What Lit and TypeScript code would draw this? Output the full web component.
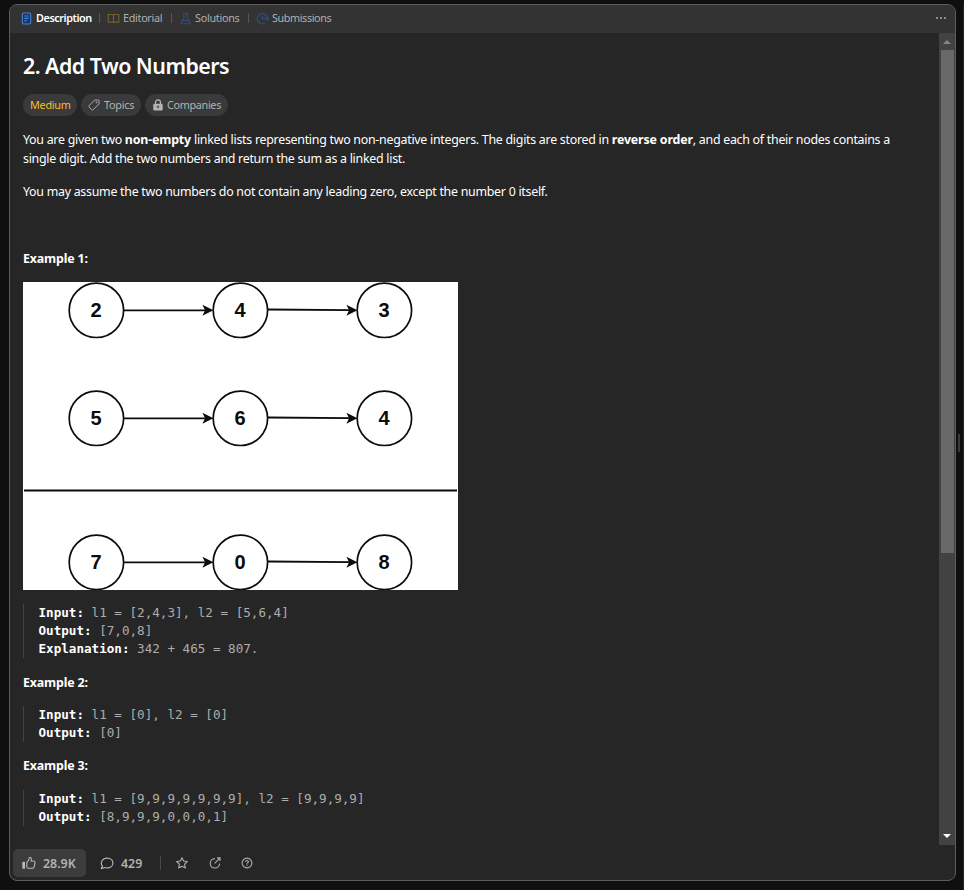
import { LitElement, html, css, svg } from "lit";
import { customElement } from "lit/decorators.js";

const xs = [73.4, 217.4, 361.4];
const rows = [
  { y: 28, v: ["2", "4", "3"] },
  { y: 136, v: ["5", "6", "4"] },
  { y: 280, v: ["7", "0", "8"] },
];

@customElement("list-diagram")
class ListDiagram extends LitElement {
  static styles = css`
    :host { display: block; width: 435px; height: 308px; background: #fff; }
    svg { display: block; }
    circle { fill: #fff; stroke: #0c0c0c; stroke-width: 1.7; }
    line { stroke: #0c0c0c; stroke-width: 1.8; }
    path { fill: #0c0c0c; }
    text { font: bold 20px "Liberation Sans", sans-serif; text-anchor: middle; fill: #0c0c0c; }
  `;
  render() {
    return html`<svg width="435" height="308" viewBox="0 0 435 308">
      ${rows.map((r) => svg`
        <line x1="101" y1=${r.y + 0.4} x2="182" y2=${r.y + 0.4}></line>
        <line x1="245" y1=${r.y - 0.5} x2="326" y2=${r.y + 0.1}></line>
        ${[190.4, 334.4].map((x) => svg`<path d="M${x} ${r.y + 0.3}l-11 -5.5 2.7 5.5 -2.7 5.5z"></path>`)}
        ${xs.map((x, i) => svg`<circle cx=${x} cy=${r.y + 0.3} r="27.2"></circle><text x=${x - 0.4} y=${r.y + 7.4}>${r.v[i]}</text>`)}
      `)}
      <line x1="1" y1="208.5" x2="434" y2="208.5"></line>
    </svg>`;
  }
}

const icons = {
  doc: html`<svg width="11" height="13" viewBox="0 0 11 13" fill="none" stroke="#3f86e0" stroke-width="1.1"><rect x="1.3" y="1" width="8.4" height="11" rx="1.4" fill="#1f3659"/><path d="M3.3 4h4.4M3.3 6.4h4.4M3.3 8.8h2.6"/></svg>`,
  book: html`<svg width="13" height="13" viewBox="0 0 13 13" fill="none" stroke="#75602a" stroke-width="1.2"><path d="M1.2 2.5h4.2q1.1 0 1.1 1v7.4q0-.7-1-.7H1.2zM11.8 2.5H7.6q-1.1 0-1.1 1v7.4q0-.7 1-.7h4.3z"/></svg>`,
  flask: html`<svg width="11" height="13" viewBox="0 0 11 13" fill="none" stroke="#304f80" stroke-width="1.1" stroke-linejoin="round"><path d="M2.6 1.3h5.8M3.9 1.3v4.2L1.2 10.2q-.6 1.5.8 1.5h7q1.4 0 .8-1.5L7.1 5.5V1.3M2.6 8.5h5.8"/></svg>`,
  clock: html`<svg width="13" height="13" viewBox="0 0 13 13" fill="none" stroke="#304f80" stroke-width="1.2"><path d="M8.8 11.3A5.2 5.2 0 1 1 11.5 5.5M6.3 3.8v3h2.4M9.6 6.3h2.9L11.2 8z"/></svg>`,
  tag: html`<svg width="12" height="12" viewBox="0 0 12 12" fill="none" stroke="#adadad" stroke-width="1" stroke-linejoin="round"><path d="M6.500 1.200 10.400 1Q11.100 1 11.100 1.700L11 5 5 10.700Q4.300 11.200 3.700 10.700L1 7.900Q.6 7.300 1.100 6.700z"/><circle cx="8.600" cy="3.400" r=".5"/></svg>`,
  lock: html`<svg width="10" height="12" viewBox="0 0 10 12"><path d="M2.5 5V3.4a2.5 2.5 0 0 1 5 0V5" fill="none" stroke="#b5b5b5" stroke-width="1.2"/><rect x=".3" y="4.7" width="9.4" height="6.8" rx="1.3" fill="#b5b5b5"/><path d="M5 6.6v2.6M3.7 7.9h2.6" stroke="#3a3a3a" stroke-width=".9"/></svg>`,
  like: html`<svg width="14" height="14" viewBox="0 0 14 14" fill="none" stroke="#b8b8b8" stroke-width="1.1" stroke-linejoin="round"><path d="M4.8 6.5Q6.8 5 7 2.8 7.2 1.2 8.4 1.4 9.6 1.8 9.4 3.3L9 5h2.8q1.4.2 1.2 1.6l-.9 4.2q-.3 1.5-1.7 1.5H6.7Q4.800 12.200 4.800 10.500z"/><rect x=".3" y="5.800" width="2.700" height="6.900" fill="#b8b8b8" stroke="none"/></svg>`,
  chat: html`<svg width="14" height="13" viewBox="0 0 14 13" fill="none" stroke="#b0b0b0" stroke-width="1.2" stroke-linejoin="round"><path d="M2.4 9.2C-.2 5.5 2.4 1.1 7.2 1.1c3.3 0 5.7 2.1 5.700 4.900s-2.400 4.900-5.700 4.900q-1.300 0-2.300-.4L1.300 11.600z"/></svg>`,
  star: html`<svg width="12" height="12" viewBox="0 0 12 12" fill="none" stroke="#b0b0b0" stroke-width="1.1" stroke-linejoin="round"><path d="m6 .8 1.600 3.200 3.700.5-2.700 2.600.7 3.800L6 9.200l-3.300 1.700.7-3.800L.7 4.500 4.400 4z"/></svg>`,
  share: html`<svg width="12" height="12" viewBox="0 0 12 12" fill="none" stroke="#b0b0b0" stroke-width="1.1"><path d="M5.900 1.600A4.700 4.700 0 1 0 10.600 6.600M5.700 6.400 10.600 1.400M8 .9h3v3"/></svg>`,
  help: html`<svg width="12" height="12" viewBox="0 0 12 12" fill="none" stroke="#b0b0b0" stroke-width="1.1"><circle cx="6" cy="6" r="4.9"/><path d="M4.600 4.900q0-1.400 1.400-1.400T7.400 4.700q0 .7-.7 1.100T6 6.800M6 7.600v1.100"/></svg>`,
};

@customElement("app-root")
class AppRoot extends LitElement {
  static styles = css`
    :host { display: flex; box-sizing: border-box; width: 964px; height: 890px; padding: 4px 0 8px 9px; background: #0f0f0f; font-family: "Noto Sans", sans-serif; font-size: 12.4px; color: #fff; overflow: hidden; }
    svg { display: block; flex: none; }
    .panel { box-sizing: border-box; width: 947px; height: 877px; border: 1px solid #5c5c5c; border-radius: 8px; background: #262626; display: flex; flex-direction: column; overflow: hidden; }
    .tabs { height: 28px; flex: none; background: #333; display: flex; align-items: center; box-sizing: border-box; padding: 0 9px 2px 11px; font-size: 10.8px; letter-spacing: -0.4px; color: #b0b0b0; white-space: nowrap; }
    .tab { display: flex; align-items: center; box-sizing: border-box; }
    .tab svg { margin-right: 4px; }
    .tab span { padding-bottom: 2px; }
    .t1 { width: 78px; color: #fff; font-weight: 600; letter-spacing: -0.42px; }
    .t2 { width: 64px; margin-left: 7px; letter-spacing: -0.3px; }
    .t2 svg { margin-right: 3px; }
    .t3 { width: 68px; margin-left: 8px; letter-spacing: -0.28px; }
    .t4 { width: 90px; margin-left: 7px; }
    .t4 svg { margin-right: 3px; }
    .sep { width: 1px; height: 10px; background: #555; flex: none; }
    .dots { margin-left: auto; display: flex; gap: 2px; }
    .dots i { width: 2px; height: 2px; border-radius: 1px; background: #aaa; }
    .body { height: 812px; flex: none; display: flex; }
    .content { flex: 1; padding: 0 13px; overflow: hidden; }
    .bar { width: 16px; background: #424242; display: flex; flex-direction: column; align-items: center; }
    .arrow { width: 0; height: 0; border: 4px solid transparent; border-top: 0; border-bottom-color: #858585; margin: 7px 0 6px; }
    .thumb { width: 13px; height: 503px; background: #686868; }
    .down { border: 4px solid transparent; border-bottom: 0; border-top-color: #fff; margin: auto 0 7px; }
    h1 { margin: 18px 0 0; font-size: 21.4px; line-height: 30px; font-weight: 600; letter-spacing: -0.53px; white-space: nowrap; }
    .chips { display: flex; gap: 4px; margin-top: 13px; font-size: 10.8px; letter-spacing: -0.32px; color: #b3b3b3; white-space: nowrap; }
    .chip { height: 22px; border-radius: 11px; background: #3a3a3a; box-sizing: border-box; display: flex; align-items: center; padding: 0 7px 1px; gap: 4px; }
    .c1 { width: 54px; color: #fbbc2b; letter-spacing: -0.25px; }
    .c2 { width: 60px; letter-spacing: -0.25px; }
    .c3 { width: 83px; padding-left: 8px; }
    p { margin: 0; line-height: 19px; letter-spacing: -0.27px; white-space: nowrap; }
    p b { letter-spacing: -0.16px; }
    .intro { margin-top: 14px; }
    .line { display: block; }
    .second { margin-top: 14px; }
    .ex { font-weight: 700; letter-spacing: -0.16px; }
    .e1 { margin-top: 48px; } .e2 { margin-top: 15px; } .e3 { margin-top: 14px; }
    list-diagram { margin-top: 14px; }
    pre { margin: 14px 0 0; padding-left: 14.5px; border-left: 1px solid #434343; font: 12.6px/18px "DejaVu Sans Mono", monospace; color: #adadad; }
    .e3 + pre { margin-top: 15px; }
    pre b { color: #fff; }
    .foot { flex: 1; display: flex; align-items: center; padding: 1px 0 0 3px; font-size: 12.4px; font-weight: 600; color: #b3b3b3; }
    .like { width: 73px; height: 28px; border-radius: 5px; background: #3c3c3c; display: flex; align-items: center; padding-left: 9px; gap: 7px; box-sizing: border-box; }
    .chat { display: flex; align-items: center; gap: 7px; width: 60px; margin-left: 14px; }
    .fsep { width: 1px; height: 14px; background: #484848; margin: 0 15px 0 0; }
    .foot .ic { margin-right: 20.5px; }
    .grip { width: 2px; height: 18px; background: #3a3a3a; margin: 430px 0 0 2px; }
    .next { width: 1px; height: 900px; background: #252525; margin: 0 0 0 3px; }
  `;
  render() {
    return html`
      <div class="panel">
        <div class="tabs">
          <div class="tab t1">${icons.doc}<span>Description</span></div><i class="sep"></i>
          <div class="tab t2">${icons.book}<span>Editorial</span></div><i class="sep"></i>
          <div class="tab t3">${icons.flask}<span>Solutions</span></div><i class="sep"></i>
          <div class="tab t4">${icons.clock}<span>Submissions</span></div>
          <div class="dots"><i></i><i></i><i></i></div>
        </div>
        <div class="body">
          <div class="content">
            <h1>2. Add Two Numbers</h1>
            <div class="chips">
              <div class="chip c1"><span>Medium</span></div>
              <div class="chip c2">${icons.tag}<span>Topics</span></div>
              <div class="chip c3">${icons.lock}<span>Companies</span></div>
            </div>
            <p class="intro"><span class="line">You are given two <b>non-empty</b> linked lists representing two non-negative integers. The digits are stored in <b>reverse order</b>, and each of their nodes contains a</span><span class="line">single digit. Add the two numbers and return the sum as a linked list.</span></p>
            <p class="second">You may assume the two numbers do not contain any leading zero, except the number 0 itself.</p>
            <p class="ex e1">Example 1:</p>
            <list-diagram></list-diagram>
            <pre><b>Input:</b> l1 = [2,4,3], l2 = [5,6,4]
<b>Output:</b> [7,0,8]
<b>Explanation:</b> 342 + 465 = 807.</pre>
            <p class="ex e2">Example 2:</p>
            <pre><b>Input:</b> l1 = [0], l2 = [0]
<b>Output:</b> [0]</pre>
            <p class="ex e3">Example 3:</p>
            <pre><b>Input:</b> l1 = [9,9,9,9,9,9,9], l2 = [9,9,9,9]
<b>Output:</b> [8,9,9,9,0,0,0,1]</pre>
          </div>
          <div class="bar"><i class="arrow"></i><i class="thumb"></i><i class="arrow down"></i></div>
        </div>
        <div class="foot">
          <div class="like">${icons.like}<span>28.9K</span></div>
          <div class="chat">${icons.chat}<span>429</span></div>
          <i class="fsep"></i>
          <span class="ic">${icons.star}</span><span class="ic">${icons.share}</span><span class="ic">${icons.help}</span>
        </div>
      </div>
      <i class="grip"></i><i class="next"></i>
    `;
  }
}
